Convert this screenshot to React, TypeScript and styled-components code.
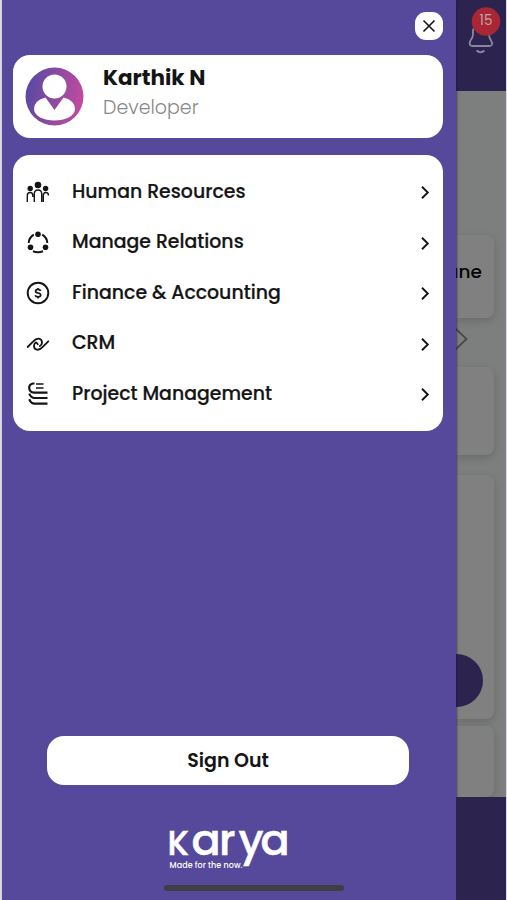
import React from 'react';
import styled, { createGlobalStyle } from 'styled-components';

const PURPLE = '#56489b';
const INK = '#151515';

const GlobalStyle = createGlobalStyle`
  * { box-sizing: border-box; }
  body { margin: 0; background: #dcdae6; }
  button { font: inherit; border: 0; padding: 0; cursor: pointer; }
`;

const Screen = styled.main`
  width: 507px;
  height: 900px;
  padding: 0 1px 0 2px;
  display: grid;
  grid-template-columns: 454px 50px;
  overflow: hidden;
  color: ${INK};
  font-family: Poppins, Inter, 'Open Sans', sans-serif;
`;

const Drawer = styled.aside`
  display: flex;
  flex-direction: column;
  align-items: center;
  height: 900px;
  padding: 12px 13px 0 11px;
  background: ${PURPLE};
  box-shadow: 1px 0 2px rgba(30, 20, 70, 0.6);
  z-index: 1;
`;

const CloseButton = styled.button`
  display: grid;
  place-items: center;
  align-self: flex-end;
  width: 28px;
  height: 28px;
  border-radius: 11px;
  background: #fff;
`;

const ProfileCard = styled.section`
  display: flex;
  gap: 19px;
  width: 430px;
  height: 83px;
  margin-top: 15px;
  padding: 12px;
  border-radius: 17px;
  background: #fff;
`;

const Identity = styled.div`
  display: flex;
  flex-direction: column;
`;

const Name = styled.h1`
  margin: -3px 0 0;
  font-size: 21.5px;
  line-height: 28px;
  font-weight: 700;
`;

const Role = styled.span`
  margin-top: 2px;
  color: #888;
  font-size: 19px;
  line-height: 27px;
  font-weight: 300;
`;

const Menu = styled.nav`
  width: 430px;
  height: 276px;
  margin-top: 17px;
  padding: 12px 13px 0 12px;
  border-radius: 17px;
  background: #fff;
`;

const MenuRow = styled.a`
  display: grid;
  grid-template-columns: 47px 1fr 10px;
  align-items: center;
  height: 50.5px;
`;

const MenuLabel = styled.span`
  justify-self: start;
  margin-top: -1.5px;
  font-size: 18.9px;
  line-height: 28px;
  font-weight: 500;
  white-space: nowrap;
  -webkit-text-stroke: 0.2px ${INK};
`;

const SignOut = styled.button`
  width: 362px;
  height: 49px;
  margin-top: 305px;
  border-radius: 17px;
  background: #fff;
  color: ${INK};
  && { font-size: 19px; font-weight: 600; }
`;

const Brand = styled.svg`
  display: block;
  margin-top: 39px;
  overflow: visible;
`;

const HomeBar = styled.div`
  width: 180px;
  height: 6px;
  margin: 10px 0 0 151px;
  align-self: flex-start;
  border-radius: 3px;
  background: #403d44;
`;

const Dimmed = styled.div`
  display: flex;
  flex-direction: column;
  height: 900px;
  overflow: hidden;
  background: #7d7f7e;
`;

const DimHeader = styled.header`
  height: 91px;
  flex: none;
  background: #2c234f;
  padding: 7px 0 0 10px;
`;

const DimCard = styled.div<{ $height: number; $gap: number }>`
  display: flex;
  flex: none;
  flex-direction: column;
  width: 38px;
  height: ${({ $height }) => $height}px;
  margin-top: ${({ $gap }) => $gap}px;
  border-radius: 0 8px 8px 0;
  background: #808080;
  box-shadow: 0 3px 9px rgba(0, 0, 0, 0.16);
`;

const CardText = styled.span`
  align-self: flex-end;
  margin: 24px 12px 0 0;
  color: #050505;
  font-size: 18.5px;
  line-height: 26px;
  font-weight: 500;
`;

const NextIcon = styled.svg`
  flex: none;
  margin: 9px 0 -31px;
`;

const DimAction = styled.div`
  width: 27px;
  height: 53px;
  margin-top: 179px;
  border-radius: 0 27px 27px 0;
  background: #2c234f;
`;

const DimFooter = styled.footer`
  flex: none;
  height: 103px;
  background: #2c234f;
  z-index: 1;
`;

const PeopleIcon = () => (
  <svg width="26" height="26" viewBox="0 -1 26 26" fill="none" stroke={INK} strokeWidth="1.4">
    <circle cx="13" cy="5" r="3.3" fill={INK} stroke="none" />
    <circle cx="5.2" cy="8.5" r="2.7" fill={INK} stroke="none" />
    <circle cx="20.6" cy="8.5" r="2.7" fill={INK} stroke="none" />
    <path d="M2.300 22v-6.500q0-3 2.900-3 2.600 0 2.600 3v1.500M9.300 22v-8q0-4 3.700-4t3.700 4v8M18.300 22v-6.500q0-3 2.500-3 2.700 0 2.700 3" />
  </svg>
);

const RelationsIcon = () => (
  <svg width="26" height="26" viewBox="0 0 26 26" fill="none" stroke={INK} strokeWidth="2">
    <path d="M17.200 4.700Q22 7.500 22.300 13M8.800 4.700Q4 7.500 3.700 13M8 21.300q5 2 10 0" />
    <circle cx="13" cy="4.200" r="2.800" fill={INK} stroke="none" />
    <circle cx="5.500" cy="17.200" r="2.800" fill={INK} stroke="none" />
    <circle cx="20.500" cy="17.200" r="2.800" fill={INK} stroke="none" />
  </svg>
);

const FinanceIcon = () => (
  <svg width="26" height="26" viewBox="0 0 26 26" fill="none" stroke={INK} strokeWidth="1.9">
    <circle cx="13" cy="13" r="10.3" />
    <path d="M15.6 10.900q-.5-1.500-2.600-1.500-2.400 0-2.400 1.800 0 1.400 2.400 1.800 2.700.4 2.700 2 0 1.900-2.700 1.900-2.300 0-2.800-1.700M13 7.900v1.500M13 16.900v1.500" strokeWidth="1.7" />
  </svg>
);

const CrmIcon = () => (
  <svg width="26" height="26" viewBox="0 0 26 26" fill="none" stroke={INK} strokeWidth="1.8" strokeLinecap="round" strokeLinejoin="round">
    <path d="M2.700 16 8 10.600Q11 7.200 14 7.600q3.200.7 3 4.200-.2 2.300-2.200 3.200" />
    <path d="M23.300 10.300 18 15.700Q15 19.100 12 18.700q-3.200-.7-3-4.200.2-2.300 2.200-3.200l1.600 2" />
  </svg>
);

const ProjectIcon = () => (
  <svg width="26" height="26" viewBox="0 0 26 26" fill="none" stroke={INK} strokeWidth="2.200">
    <path d="M9.500 2.500H8Q4.200 3.200 4.200 6.600q0 5 5 5H22.500" />
    <path d="M11 3h7.500M11 7h7.500" strokeWidth="1.400" />
    <path d="M4.200 12.600q2 4.400 5.300 4.400h13M4.200 18.200q2 4.500 5.300 4.500h13" />
  </svg>
);

const Chevron = () => (
  <svg width="10" height="16" viewBox="0 0 10 16" fill="none" stroke={INK} strokeWidth="1.900">
    <path d="m2 2.800 5.800 5.700L2 14.200" />
  </svg>
);

const Avatar = () => (
  <svg width="59" height="59" viewBox="0 0 59 59">
    <defs>
      <linearGradient id="avatar" x1="0" y1="0.4" x2="1" y2="0.6">
        <stop stopColor="#5949a3" />
        <stop offset="1" stopColor="#c34b9f" />
      </linearGradient>
    </defs>
    <circle cx="29.500" cy="29.500" r="29" fill="url(#avatar)" />
    <circle cx="29.500" cy="19.500" r="12" fill="#fff" />
    <path d="M20.500 30.500q-11.500 3-11.500 11.500c0 7 10 11.500 20.500 11.500S50 49 50 42q0-8.500-11.500-11.500l-9 12.500z" fill="#fff" />
  </svg>
);

const Bell = () => (
  <svg width="36" height="52" viewBox="0 0 36 52" fill="none" stroke="#8a869e" strokeWidth="1.800">
    <path d="M7.500 21.500q-1 2-.5 6.500 0 2-2.500 5.500-2.500 5 2 5.500h17q4.500-.5 1.500-5.500-2-3-2-6" />
    <path d="M10.500 43.500q4 3.500 8 0" />
    <circle cx="20" cy="14.500" r="14.300" fill="#a92635" stroke="none" />
    <text x="20" y="18" textAnchor="middle" fill="#c0a3aa" stroke="none" fontSize="13.500" fontWeight="400">15</text>
  </svg>
);

const items = [
  { label: 'Human Resources', Icon: PeopleIcon },
  { label: 'Manage Relations', Icon: RelationsIcon },
  { label: 'Finance & Accounting', Icon: FinanceIcon },
  { label: 'CRM', Icon: CrmIcon },
  { label: 'Project Management', Icon: ProjectIcon },
];

export default function App() {
  return (
    <>
      <GlobalStyle />
      <Screen>
        <Drawer>
          <CloseButton aria-label="Close">
            <svg width="14" height="14" viewBox="0 0 14 14" stroke={INK} strokeWidth="1.6">
              <path d="m1.500 1.500 11 11m0-11-11 11" />
            </svg>
          </CloseButton>
          <ProfileCard>
            <Avatar />
            <Identity>
              <Name>Karthik N</Name>
              <Role>Developer</Role>
            </Identity>
          </ProfileCard>
          <Menu>
            {items.map(({ label, Icon }) => (
              <MenuRow key={label}>
                <Icon />
                <MenuLabel>{label}</MenuLabel>
                <Chevron />
              </MenuRow>
            ))}
          </Menu>
          <SignOut>Sign Out</SignOut>
          <Brand width="120" height="51" viewBox="0 0 120 51" fill="#fff">
            <text x="-0.500 23.500 51 70.500 92.500" y="31" fontSize="43" fontWeight="500" stroke="#fff" strokeWidth="0.500">
              <tspan fontSize="34">K</tspan>arya
            </text>
            <text x="1.500" y="43.500" fontSize="8" fontWeight="500" textLength="73">Made for the now.</text>
          </Brand>
          <HomeBar />
        </Drawer>
        <Dimmed>
          <DimHeader>
            <Bell />
          </DimHeader>
          <DimCard $height={83} $gap={144}>
            <CardText>une</CardText>
          </DimCard>
          <NextIcon width="16" height="24" viewBox="0 0 16 24" fill="none" stroke="#484848" strokeWidth="1.8">
            <path d="m-1 1 11.500 11L-1 23" />
          </NextIcon>
          <DimCard $height={88} $gap={47} />
          <DimCard $height={244} $gap={20}>
            <DimAction />
          </DimCard>
          <DimCard $height={71} $gap={7} />
          <DimFooter />
        </Dimmed>
      </Screen>
    </>
  );
}
